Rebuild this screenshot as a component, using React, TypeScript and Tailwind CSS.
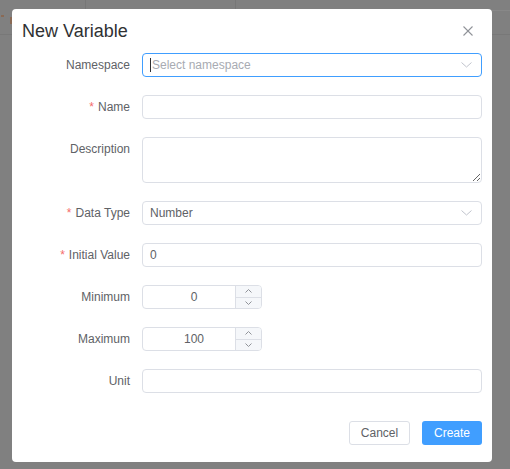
import React from "react";

const font = { fontFamily: '"Liberation Sans", Arial, sans-serif' };

function Chevron() {
  return (
    <svg width="11" height="6" viewBox="0 0 11 6" className="shrink-0">
      <polyline points="0.5,0.5 5.5,5 10.5,0.5" fill="none" stroke="#c0c4cc" strokeWidth="1" />
    </svg>
  );
}

function Label({ text, required, top }: { text: string; required?: boolean; top?: boolean }) {
  return (
    <div className={`w-[110px] shrink-0 pr-[12px] flex justify-end ${top ? "items-start" : "items-center"} h-[24px] leading-[24px] text-[12px] text-[#606266]`}>
      {required && <span className="text-[#f56c6c] mr-[4px]">*</span>}
      <span>{text}</span>
    </div>
  );
}

function NumberInput({ value }: { value: string }) {
  return (
    <div className="w-[120px] h-[24px] flex border border-[#dcdfe6] rounded-[4px] overflow-hidden">
      <div className="flex-1 flex items-center justify-center pl-[10px] text-[12px] text-[#606266]">{value}</div>
      <div className="w-[26px] border-l border-[#dcdfe6] bg-[#f5f7fa] flex flex-col">
        <div className="flex-1 flex items-center justify-center">
          <svg width="7" height="4" viewBox="0 0 7 4">
            <polyline points="0.5,3.5 3.5,0.5 6.5,3.5" fill="none" stroke="#909399" strokeWidth="1" />
          </svg>
        </div>
        <div className="flex-1 flex items-center justify-center border-t border-[#dcdfe6]">
          <svg width="7" height="4" viewBox="0 0 7 4">
            <polyline points="0.5,0.5 3.5,3.5 6.5,0.5" fill="none" stroke="#909399" strokeWidth="1" />
          </svg>
        </div>
      </div>
    </div>
  );
}

export default function App() {
  return (
    <div className="relative w-[510px] h-[469px] bg-[#808080] overflow-hidden" style={font}>
      {/* faint underlying page lines */}
      <div className="absolute left-[85px] top-0 w-px h-[40px] bg-[#777]" />
      <div className="absolute left-[235px] top-0 w-px h-[40px] bg-[#777]" />
      <div className="absolute left-0 top-[34px] w-[510px] h-px bg-[#787878]" />
      <div className="absolute left-[492px] top-[10px] w-[18px] h-px bg-[#888]" />
      <div className="absolute left-[1px] top-[15px] w-[3px] h-[2px] bg-[#8a6a55]" />
      <div className="absolute left-[10px] top-[17px] w-[2px] h-[7px] bg-[#8a6a55]" />

      <div className="relative pl-[12px] pt-[9px]">
        <div className="w-[480px] h-[453px] bg-white rounded-[4px] flex flex-col">
          {/* header */}
          <div className="flex items-center justify-between pt-[10px] pl-[10px] pr-[19px] h-[34px]">
            <span className="text-[18px] leading-[24px] text-[#303133]">New Variable</span>
            <svg width="10" height="10" viewBox="0 0 10 10">
              <line x1="0.5" y1="0.5" x2="9.5" y2="9.5" stroke="#909399" strokeWidth="1.1" />
              <line x1="9.5" y1="0.5" x2="0.5" y2="9.5" stroke="#909399" strokeWidth="1.1" />
            </svg>
          </div>

          {/* form */}
          <div className="flex flex-col pt-[10px] pl-[20px] pr-[10px]">
            <div className="flex mb-[18px]">
              <Label text="Namespace" />
              <div className="flex-1 h-[24px] border border-[#409eff] rounded-[4px] flex items-center pl-[7px] pr-[9px]">
                <span className="w-px h-[14px] bg-[#303133] mr-[1px]" />
                <span className="flex-1 text-[12px] text-[#a8abb2]">Select namespace</span>
                <Chevron />
              </div>
            </div>

            <div className="flex mb-[18px]">
              <Label text="Name" required />
              <div className="flex-1 h-[24px] border border-[#dcdfe6] rounded-[4px]" />
            </div>

            <div className="flex mb-[18px]">
              <Label text="Description" top />
              <textarea
                className="flex-1 h-[46px] border border-[#dcdfe6] rounded-[4px] resize-y outline-none"
                readOnly
              />
            </div>

            <div className="flex mb-[18px]">
              <Label text="Data Type" required />
              <div className="flex-1 h-[24px] border border-[#dcdfe6] rounded-[4px] flex items-center pl-[7px] pr-[9px]">
                <span className="flex-1 text-[12px] text-[#606266]">Number</span>
                <Chevron />
              </div>
            </div>

            <div className="flex mb-[18px]">
              <Label text="Initial Value" required />
              <div className="flex-1 h-[24px] border border-[#dcdfe6] rounded-[4px] flex items-center pl-[7px]">
                <span className="text-[12px] text-[#606266]">0</span>
              </div>
            </div>

            <div className="flex mb-[18px]">
              <Label text="Minimum" />
              <NumberInput value="0" />
            </div>

            <div className="flex mb-[18px]">
              <Label text="Maximum" />
              <NumberInput value="100" />
            </div>

            <div className="flex mb-[18px]">
              <Label text="Unit" />
              <div className="flex-1 h-[24px] border border-[#dcdfe6] rounded-[4px]" />
            </div>
          </div>

          {/* footer */}
          <div className="flex justify-end gap-[12px] pt-[10px] pr-[10px]">
            <div className="w-[61px] h-[24px] border border-[#dcdfe6] rounded-[3px] flex items-center justify-center text-[12px] text-[#606266]">
              Cancel
            </div>
            <div className="w-[60px] h-[24px] bg-[#409eff] rounded-[3px] flex items-center justify-center text-[12px] text-white">
              Create
            </div>
          </div>
        </div>
      </div>
    </div>
  );
}
